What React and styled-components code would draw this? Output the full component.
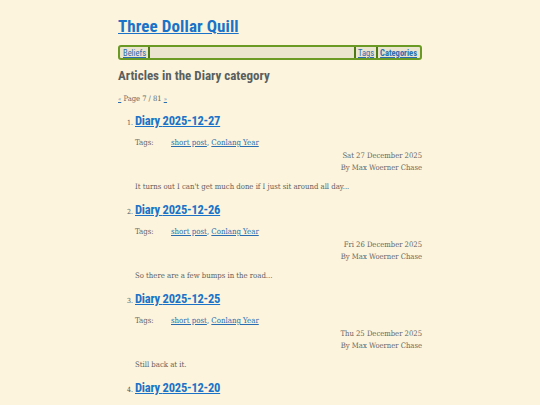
import React from "react";
import styled, { createGlobalStyle } from "styled-components";

const GlobalStyle = createGlobalStyle`
  html, body {
    margin: 0;
    padding: 0;
    background: #fcf4dc;
  }
  body {
    font-family: "DejaVu Serif", serif;
    font-stretch: condensed;
    color: #555555;
  }
`;

const Page = styled.div`
  max-width: 304px;
  margin: 0 auto;
  padding: 15px 0 0;
`;

const SiteTitle = styled.h1`
  margin: 0 0 8px;
  font-family: "Roboto", "Open Sans", sans-serif;
  font-weight: 700;
  font-size: 17px;
  line-height: 22px;
  letter-spacing: 0.1px;

  a {
    color: #1a73c8;
  }
`;

const Nav = styled.nav`
  display: flex;
  align-items: center;
  height: 9px;
  padding: 1px 2px;
  background: #ebe4cf;
  border: 2px solid #6a9a24;
  border-radius: 3px;
  font-family: "Roboto", sans-serif;
  font-size: 8.5px;
`;

const NavLink = styled.a`
  color: #2a6db0;
  font-weight: ${(p) => (p.$current ? 700 : 400)};
  padding: 0 1px;
`;

const Sep = styled.span`
  width: 2px;
  height: 11px;
  background: #4d7a14;
  margin: 0 1px;
`;

const Spacer = styled.span`
  flex: 1;
`;

const Heading = styled.h2`
  margin: 8px 0 10px;
  font-family: "Roboto", "Open Sans", sans-serif;
  font-weight: 700;
  font-size: 13px;
  line-height: 16px;
  color: #5a5f60;
`;

const Pager = styled.div`
  font-size: 7.5px;
  line-height: 10px;
  color: #666;

  a {
    color: #2a6db0;
    font-size: 6px;
  }
`;

const List = styled.ol`
  margin: 8px 0 0;
  padding-left: 17px;
`;

const Item = styled.li`
  font-size: 7px;
  margin-bottom: 9px;

  &::marker {
    color: #555;
  }
`;

const ItemTitle = styled.h3`
  display: inline-block;
  margin: 0;
  font-family: "Roboto", "Open Sans", sans-serif;
  font-weight: 700;
  font-size: 12.5px;
  line-height: 18px;
  letter-spacing: -0.2px;

  a {
    color: #1a73c8;
  }
`;

const TagRow = styled.div`
  display: flex;
  margin-top: 8px;
  font-size: 7.8px;
  line-height: 10px;
`;

const TagLabel = styled.span`
  width: 36px;
  color: #666;
`;

const TagLink = styled.a`
  color: #2a6db0;
`;

const Meta = styled.div`
  text-align: right;
  font-size: 7.6px;
  line-height: 12px;
  color: #666;
  margin-top: 2px;
`;

const Summary = styled.p`
  margin: 8px 0 0;
  font-size: 7.7px;
  line-height: 10px;
  color: #606060;
`;

const articles = [
  { date: "2025-12-27", long: "Sat 27 December 2025", summary: "It turns out I can't get much done if I just sit around all day..." },
  { date: "2025-12-26", long: "Fri 26 December 2025", summary: "So there are a few bumps in the road..." },
  { date: "2025-12-25", long: "Thu 25 December 2025", summary: "Still back at it." },
  { date: "2025-12-20", long: "Sat 20 December 2025", summary: "..." },
];

const App = () => {
  return (
    <Page>
      <GlobalStyle />
      <SiteTitle>
        <a href="#">Three Dollar Quill</a>
      </SiteTitle>
      <Nav>
        <NavLink href="#">Beliefs</NavLink>
        <Sep />
        <Spacer />
        <Sep />
        <NavLink href="#">Tags</NavLink>
        <Sep />
        <NavLink href="#" $current>
          Categories
        </NavLink>
      </Nav>
      <Heading>Articles in the Diary category</Heading>
      <Pager>
        <a href="#">«</a> Page 7 / 81 <a href="#">»</a>
      </Pager>
      <List>
        {articles.map((a) => (
          <Item key={a.date}>
            <ItemTitle>
              <a href="#">Diary {a.date}</a>
            </ItemTitle>
            <TagRow>
              <TagLabel>Tags:</TagLabel>
              <span>
                <TagLink href="#">short post</TagLink>,{" "}
                <TagLink href="#">Conlang Year</TagLink>
              </span>
            </TagRow>
            <Meta>
              {a.long}
              <br />
              By Max Woerner Chase
            </Meta>
            <Summary>{a.summary}</Summary>
          </Item>
        ))}
      </List>
    </Page>
  );
};

export default App;
